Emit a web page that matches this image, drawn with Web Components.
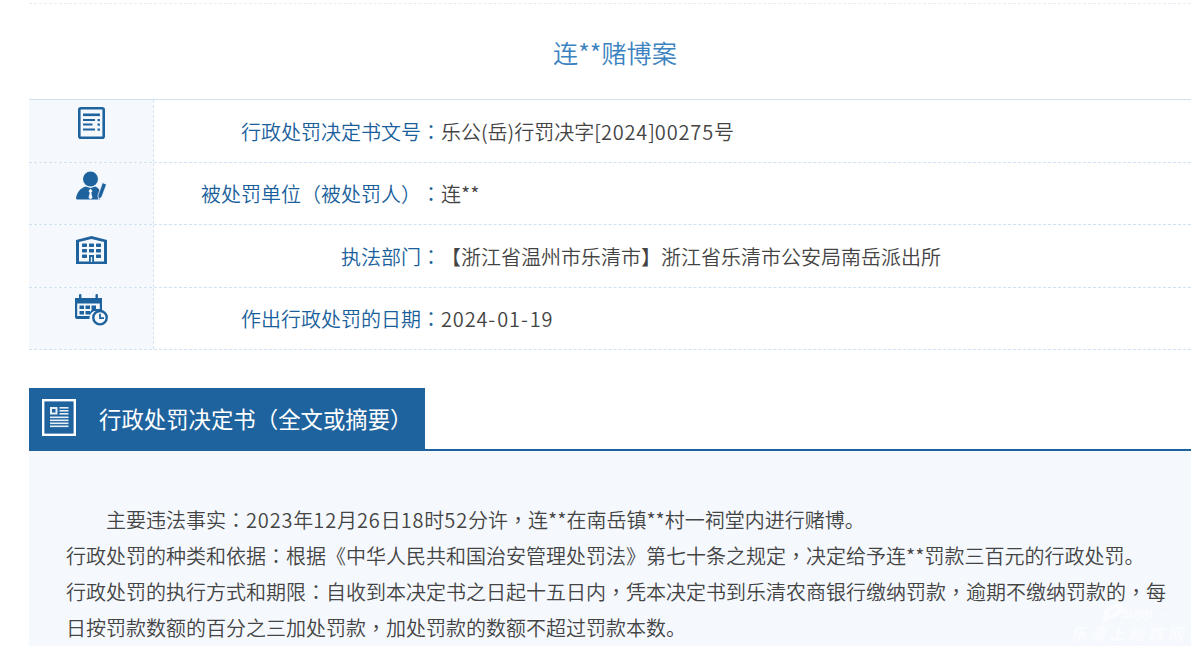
<!DOCTYPE html>
<html lang="zh-CN"><head><meta charset="utf-8"><title>连**赌博案</title>
<style>
html,body{margin:0;padding:0;background:#fff;overflow:hidden;height:646px}
body{font-family:"Noto Sans CJK SC","Noto Sans",sans-serif;font-weight:350;text-spacing-trim:space-all}
.d{letter-spacing:.85px}
.h{letter-spacing:2px}
.p{font-family:"Noto Sans CJK TC","Noto Sans CJK SC",sans-serif}
</style></head><body>
<case-page>
  <case-title>连**赌博案</case-title>
  <info-table>
    <info-row icon="doc" off="7" h="63"><span slot="label">行政处罚决定书文号：</span>乐公(岳)行罚决字[2024]00275号</info-row>
    <info-row icon="person" off="8" h="62"><span slot="label">被处罚单位（被处罚人）：</span>连**</info-row>
    <info-row icon="building" off="11" h="63"><span slot="label">执法部门：</span>【浙江省温州市乐清市】浙江省乐清市公安局南岳派出所</info-row>
    <info-row icon="calendar" off="6" h="62"><span slot="label">作出行政处罚的日期：</span>2024-01-19</info-row>
  </info-table>
  <section-head>行政处罚决定书（全文或摘要）</section-head>
  <body-text>
    <p style="text-indent:40px;margin:0">主要违法事实：2023年12月26日18时52分许，连**在南岳镇**村一祠堂内进行赌博。</p>
    <p style="margin:0">行政处罚的种类和依据：根据《中华人民共和国治安管理处罚法》第七十条之规定，决定给予连**罚款三百元的行政处罚。</p>
    <p style="margin:0">行政处罚的执行方式和期限：自收到本决定书之日起十五日内，凭本决定书到乐清农商银行缴纳罚款，逾期不缴纳罚款的，每</p>
    <p style="margin:0">日按罚款数额的百分之三加处罚款，加处罚款的数额不超过罚款本数。</p>
  </body-text>
</case-page>
<site-mark></site-mark>
<script>
const ICONS={
doc:`<svg width="27" height="32" viewBox="0 0 27 32"><rect x="1.3" y="1.3" width="24.4" height="29.4" rx="1.5" fill="none" stroke="#1f639e" stroke-width="2.6"/><g fill="#1f639e"><rect x="5" y="6.500" width="17" height="2.600"/><rect x="5" y="12" width="12" height="2"/><rect x="5" y="16.500" width="9.500" height="2"/><rect x="5" y="21.500" width="12" height="2"/><rect x="19.500" y="12" width="2.400" height="2.200"/><rect x="19.500" y="16.500" width="2.400" height="2.200"/><rect x="19.500" y="21.500" width="2.400" height="2.200"/></g></svg>`,
person:`<svg width="31" height="30" viewBox="0 0 31 30"><g fill="#1f639e"><circle cx="14.500" cy="8" r="7.500"/><path d="M0 27.500C1 20.500 4.500 17.500 9.500 15.500L14.500 17l5-1.500c3 1.500 4.500 3.500 5 6.500l-.5 6.500H2.500C1 28.500 0 28.200 0 27.500z"/><path d="M26.500 11.500l4 2-4.700 12.500-3.300 2.500-.5-4.200z" stroke="#f5f9fe" stroke-width=".8"/></g><path d="M14.500 17.500l-2 2.500 1.200 1.800-1.200 5 2 1.500 2-1.500-1.200-5 1.200-1.800z" fill="#f5f9fe"/></svg>`,
building:`<svg width="31" height="28" viewBox="0 0 31 28"><path fill="#1f639e" fill-rule="evenodd" d="M0 4L15.500 0 31 4v24H0zM3 6v19.500h25V6L15.500 3z"/><g fill="#1f639e"><rect x="6" y="7.500" width="5" height="3.400" rx=".6"/><rect x="13" y="7.500" width="5" height="3.400" rx=".6"/><rect x="20" y="7.500" width="5" height="3.400" rx=".6"/><rect x="6" y="13" width="5" height="3.400" rx=".6"/><rect x="13" y="13" width="5" height="3.400" rx=".6"/><rect x="20" y="13" width="5" height="3.400" rx=".6"/><rect x="6" y="18.500" width="5" height="3.400" rx=".6"/><rect x="20" y="18.500" width="5" height="3.400" rx=".6"/><rect x="13" y="19" width="5" height="7"/></g><rect x="14.800" y="21" width="1.400" height="5" fill="#e6eef6"/></svg>`,
calendar:`<svg width="33" height="32" viewBox="0 0 33 32"><g fill="#1f639e"><path d="M0 4h27v13h-8a8 8 0 0 0-4.500 8H2a2 2 0 0 1-2-2zM2.200 9.500V22h12.500v-3L17 15h7.800V9.500z" fill-rule="evenodd"/><rect x="4" y="0" width="2.400" height="6.500" rx="1"/><rect x="20.500" y="0" width="2.400" height="6.500" rx="1"/><rect x="4.500" y="11.500" width="4.500" height="3.500"/><rect x="10.500" y="11.500" width="4.500" height="3.500"/><rect x="16.500" y="11.500" width="4.500" height="3.500"/><rect x="4.500" y="17" width="4.500" height="3.500"/><rect x="10.500" y="17" width="4.500" height="3.500"/></g><circle cx="25" cy="23.700" r="6.700" fill="#f5f9fe" stroke="#1f639e" stroke-width="2.400"/><path d="M25 19.700v4.500h4" fill="none" stroke="#1f639e" stroke-width="1.800"/></svg>`,
news:`<svg width="34" height="37" viewBox="0 0 34 37"><rect x="1.200" y="1.200" width="31.600" height="34.600" fill="none" stroke="#fff" stroke-width="2.400"/><g fill="#e6eef6"><path fill-rule="evenodd" d="M8 8h7.500v7.500H8zM10 10v3.500h3.500V10z"/><rect x="17.500" y="8" width="9" height="1.600"/><rect x="17.500" y="11" width="9" height="1.600"/><rect x="17.500" y="14" width="9" height="1.600"/><rect x="8" y="17.500" width="18.500" height="1.600"/><rect x="8" y="20.500" width="18.500" height="1.600"/><rect x="8" y="23.500" width="18.500" height="1.600"/><rect x="8" y="26.500" width="18.500" height="1.600"/></g></svg>`
};
function def(name,css,html,init){
  customElements.define(name,class extends HTMLElement{
    constructor(){super();const r=this.attachShadow({mode:"open"});r.innerHTML=`<style>${css}</style>${html}`;}
    connectedCallback(){init&&init(this)}
  });
}
def("case-page",`:host{display:block;width:1172px;margin-left:29px;padding-top:3px}
.top{border-top:1px dashed #e4edf5}`,`<div class="top"></div><slot></slot>`);
def("case-title",`:host{display:block;height:95px;box-sizing:border-box;padding-top:30px;text-align:center;font-size:25.2px;line-height:36px;color:#3b83c0}`,`<slot></slot>`);
def("info-table",`:host{display:block;border-top:1px solid #cfe0ee}`,`<slot></slot>`);
def("info-row",`:host{display:grid;grid-template-columns:124px 1px 287px 1fr;grid-template-rows:minmax(0,1fr);box-sizing:border-box;border-bottom:1px dashed #cfe2f3;font-size:20px;color:#444}
.ic{background:#f5f9fe;display:flex;justify-content:center;box-sizing:border-box;min-height:0}
.ln{border-left:1px dashed #d5e2f0}
.lb{color:#1a5f9c;text-align:right}
.v{white-space:nowrap}
svg{display:block}`,`<div class="ic"></div><div class="ln"></div><div class="lb"><slot name="label"></slot></div><div class="v"><slot></slot></div>`,
el=>{const ic=el.shadowRoot.querySelector(".ic");ic.innerHTML=ICONS[el.getAttribute("icon")];ic.style.paddingTop=el.getAttribute("off")+"px";
const h=el.getAttribute("h");el.style.height=h+"px";el.style.lineHeight=h+"px"});
def("section-head",`:host{display:block;margin-top:38px;border-bottom:2px solid #1f639e;height:63px;box-sizing:border-box}
.b{display:flex;align-items:center;width:396px;height:61px;background:#1f639e;color:#fff;font-size:22.4px;font-weight:400;box-sizing:border-box;padding:0 0 2px 13px}
.t{margin-left:23px;white-space:nowrap}svg{display:block}`,`<div class="b"><span class="i"></span><span class="t"><slot></slot></span></div>`,
el=>{el.shadowRoot.querySelector(".i").innerHTML=ICONS.news});
def("body-text",`:host{display:block;background:#f5f9fe;padding:51px 30px 0 37px;font-size:20px;line-height:36px;color:#444;height:195px;box-sizing:border-box;overflow:hidden}`,`<slot></slot>`);
def("site-mark",`:host{position:absolute;left:1070px;top:600px;width:121px;height:46px;color:#fff;pointer-events:none}
.t{position:absolute;left:0;top:23px;font-size:16px;font-weight:700;font-style:italic;letter-spacing:3.4px;white-space:nowrap;line-height:20px;opacity:.6}
.u{position:absolute;left:52px;top:6px;font:italic 700 13px/16px "Liberation Sans",sans-serif;opacity:.7}
.c{font-size:8px;opacity:.6}
svg{position:absolute;left:30px;top:2px}`,`<svg width="26" height="22" viewBox="0 0 26 22"><path d="M3 20C0 11 9 2 18 2c5 0 7 4 4 8-4 5-11 7-19 10zM9 13c3 0 7-2 8-5 0-2-4-2-6 0-2 1-3 3-2 5z" fill="#fff" fill-rule="evenodd" opacity=".55"/></svg><span class="u">5upp<span class="c">.com</span></span><span class="t">乐清上班族网</span>`);
function typeset(root){
  const w=document.createTreeWalker(root,NodeFilter.SHOW_TEXT),nodes=[];
  while(w.nextNode())if(w.currentNode.nodeValue.trim())nodes.push(w.currentNode);
  for(const n of nodes){
    const f=document.createDocumentFragment();let last=0;const s=n.nodeValue;
    for(const m of s.matchAll(/[0-9]+|-|[，：（）]/g)){
      f.append(s.slice(last,m.index));
      const sp=document.createElement("span");
      sp.className=m[0]==="-"?"h":/[0-9]/.test(m[0])?"d":"p";
      if(sp.className==="p")sp.lang="zh-TW";
      sp.textContent=m[0];f.append(sp);last=m.index+m[0].length;
    }
    f.append(s.slice(last));n.replaceWith(f);
  }
}
typeset(document.querySelector("case-page"));
</script>
</body></html>
